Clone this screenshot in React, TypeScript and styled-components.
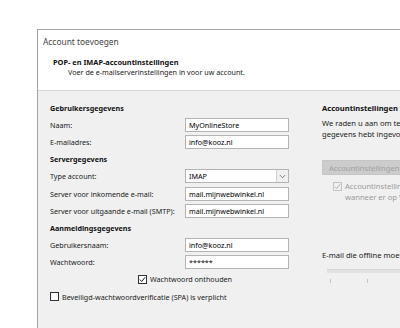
import React from 'react';
import styled, { createGlobalStyle } from 'styled-components';

const Global = createGlobalStyle`
  html, body { margin: 0; padding: 0; background: #ffffff; }
  body {
    width: 400px; height: 328px; overflow: hidden;
    font-family: "Noto Sans", "Open Sans", sans-serif;
    color: #1a1a1a;
  }
`;

const Page = styled.div`
  width: 400px;
  height: 328px;
  overflow: hidden;
  box-sizing: border-box;
  padding: 29px 0 0 37px;
`;

const Dialog = styled.div`
  width: 440px;
  height: 320px;
  border: 1px solid #a3a3a3;
  background: #f0f0f0;
  display: flex;
  flex-direction: column;
`;

const TitleBar = styled.div`
  height: 22px;
  background: #ffffff;
  display: flex;
  align-items: center;
  padding-left: 5px;
  font-size: 8.4px;
  color: #444444;
`;

const Header = styled.div`
  background: #ffffff;
  height: 39px;
  box-sizing: border-box;
  padding: 5px 0 0 15px;
  border-bottom: 1px solid #d4d4d4;
  display: flex;
  flex-direction: column;
`;

const HeaderTitle = styled.div`
  font-size: 7.4px;
  font-weight: 700;
  line-height: 10px;
  color: #111;
`;

const HeaderSub = styled.div`
  font-size: 7.2px;
  line-height: 10px;
  padding-left: 15px;
  color: #222;
`;

const Body = styled.div`
  display: flex;
  flex: 1;
  padding-top: 8px;
`;

const LeftPane = styled.div`
  width: 251px;
  box-sizing: border-box;
  padding-left: 12px;
  display: grid;
  grid-template-columns: 135px 104px;
  grid-auto-rows: 17.2px;
  align-content: start;
`;

const RightPane = styled.div`
  flex: 1;
  padding-left: 33px;
  display: flex;
  flex-direction: column;
  white-space: nowrap;
  overflow: hidden;
  font-size: 7.6px;
`;

const Section = styled.div`
  grid-column: 1 / -1;
  display: flex;
  align-items: center;
  font-size: 7.2px;
  font-weight: 700;
  color: #111;
`;

const Label = styled.label`
  display: flex;
  align-items: center;
  font-size: 7.2px;
  white-space: nowrap;
`;

const Field = styled.div`
  display: flex;
  align-items: center;
`;

const TextBox = styled.div`
  width: 104px;
  height: 14px;
  box-sizing: border-box;
  border: 1px solid #b4b4b4;
  background: #ffffff;
  display: flex;
  align-items: center;
  padding-left: 3px;
  font-size: 7.2px;
  color: #000;
  white-space: nowrap;
  overflow: hidden;
`;

const SelectBox = styled(TextBox)`
  padding-left: 3px;
  justify-content: space-between;
  padding-right: 0;
`;

const SelectArrow = styled.div`
  width: 12px;
  height: 12px;
  box-sizing: border-box;
  border-left: 1px solid #d0d0d0;
  background: #f0f0f0;
  display: flex;
  align-items: center;
  justify-content: center;
`;

const CheckRow = styled.div<{ $indent: number }>`
  grid-column: 1 / -1;
  display: flex;
  align-items: center;
  gap: 3px;
  padding-left: ${(p) => p.$indent}px;
  font-size: 7.2px;
  white-space: nowrap;
`;

const Box = styled.span<{ $disabled?: boolean }>`
  width: 9px;
  height: 9px;
  box-sizing: border-box;
  border: 1px solid ${(p) => (p.$disabled ? '#c4c4c4' : '#333333')};
  background: ${(p) => (p.$disabled ? '#f0f0f0' : '#ffffff')};
  display: inline-flex;
  align-items: center;
  justify-content: center;
  flex: none;
`;

const RightTitle = styled.div`
  height: 17.2px;
  display: flex;
  align-items: center;
  font-weight: 700;
  color: #111;
`;

const Para = styled.div`
  margin-top: 2px;
  line-height: 11px;
`;

const TestButton = styled.div`
  margin-top: 20px;
  width: 140px;
  height: 15px;
  background: #cccccc;
  border: 1px solid #c6c6c6;
  box-sizing: border-box;
  display: flex;
  align-items: center;
  padding-left: 6px;
  color: #a0a0a0;
`;

const AutoTest = styled.div`
  margin-top: 6px;
  padding-left: 11px;
  display: flex;
  gap: 3px;
  align-items: flex-start;
  line-height: 11px;
  color: #9a9a9a;
`;

const OfflineLabel = styled.div`
  margin-top: 47px;
  line-height: 11px;
`;

const Slider = styled.div`
  margin-top: 8px;
  margin-left: 5px;
  width: 120px;
  height: 3px;
  background: #e2e2e2;
  border-top: 1px solid #d6d6d6;
`;

const Ticks = styled.div`
  margin-top: 6px;
  margin-left: 8px;
  display: flex;
  gap: 36px;
`;

const Tick = styled.span`
  width: 1px;
  height: 4px;
  background: #c4c4c4;
`;

const Check = ({ color = '#222' }: { color?: string }) => (
  <svg width="7" height="7" viewBox="0 0 7 7">
    <path d="M0.8 3.6 L2.7 5.5 L6.2 1.2" fill="none" stroke={color} strokeWidth="1" />
  </svg>
);

const Chevron = () => (
  <svg width="7" height="5" viewBox="0 0 7 5">
    <path d="M0.8 1 L3.5 3.8 L6.2 1" fill="none" stroke="#777" strokeWidth="0.9" />
  </svg>
);

export default function App() {
  return (
    <>
      <Global />
      <Page>
        <Dialog>
          <TitleBar>Account toevoegen</TitleBar>
          <Header>
            <HeaderTitle>POP- en IMAP-accountinstellingen</HeaderTitle>
            <HeaderSub>Voer de e-mailserverinstellingen in voor uw account.</HeaderSub>
          </Header>
          <Body>
            <LeftPane>
              <Section>Gebruikersgegevens</Section>
              <Label>Naam:</Label>
              <Field><TextBox>MyOnlineStore</TextBox></Field>
              <Label>E-mailadres:</Label>
              <Field><TextBox>info@kooz.nl</TextBox></Field>
              <Section>Servergegevens</Section>
              <Label>Type account:</Label>
              <Field>
                <SelectBox>
                  IMAP
                  <SelectArrow><Chevron /></SelectArrow>
                </SelectBox>
              </Field>
              <Label>Server voor inkomende e-mail:</Label>
              <Field><TextBox>mail.mijnwebwinkel.nl</TextBox></Field>
              <Label>Server voor uitgaande e-mail (SMTP):</Label>
              <Field><TextBox>mail.mijnwebwinkel.nl</TextBox></Field>
              <Section>Aanmeldingsgegevens</Section>
              <Label>Gebruikersnaam:</Label>
              <Field><TextBox>info@kooz.nl</TextBox></Field>
              <Label>Wachtwoord:</Label>
              <Field><TextBox>******</TextBox></Field>
              <CheckRow $indent={88}>
                <Box><Check /></Box>
                Wachtwoord onthouden
              </CheckRow>
              <CheckRow $indent={0}>
                <Box />
                Beveiligd-wachtwoordverificatie (SPA) is verplicht
              </CheckRow>
            </LeftPane>
            <RightPane>
              <RightTitle>Accountinstellingen testen</RightTitle>
              <Para>
                We raden u aan om te testen of uw account goed werkt nadat u alle
                <br />
                gegevens hebt ingevoerd.
              </Para>
              <TestButton>Accountinstellingen testen...</TestButton>
              <AutoTest>
                <Box $disabled style={{ marginTop: 1 }}><Check color="#b0b0b0" /></Box>
                <div>
                  Accountinstellingen automatisch testen
                  <br />
                  wanneer er op Volgende wordt geklikt
                </div>
              </AutoTest>
              <OfflineLabel>E-mail die offline moet worden bewaard: Alle</OfflineLabel>
              <Slider />
              <Ticks>
                <Tick />
                <Tick />
              </Ticks>
            </RightPane>
          </Body>
        </Dialog>
      </Page>
    </>
  );
}
